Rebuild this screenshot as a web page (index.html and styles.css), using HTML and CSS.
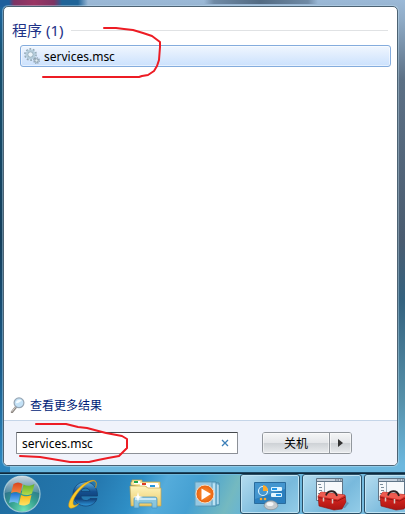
FILE: index.html
```
<!DOCTYPE html>
<html lang="zh-CN">
<head>
    <meta charset="UTF-8">
    <meta name="viewport" content="width=device-width, initial-scale=1.0">
    <title>services.msc</title>
    <link rel="stylesheet" href="styles.css">
</head>
<body>
    <svg width="0" height="0" class="defs" aria-hidden="true">
        <defs>
            <linearGradient id="red-box" x1="0" y1="0" x2="0" y2="1">
                <stop offset="0" stop-color="#dc3a32"/>
                <stop offset=".5" stop-color="#cb211c"/>
                <stop offset="1" stop-color="#a81512"/>
            </linearGradient>
            <symbol id="toolbox" viewBox="0 0 34 34">
                <path d="M1.500 1.500h26v22h-26z" fill="#f6f9fb" stroke="#5f7587"/>
                <path d="M2 2h25v2.500H2z" fill="#c3d0dc"/>
                <path d="M1.500 4.500h26" stroke="#5f7587"/>
                <path d="M20 3h1.500M22.500 3H24M25 3h1.500" stroke="#4e6171"/>
                <path d="M9.500 5v18" stroke="#9cacb8"/>
                <path d="M3 7.500h3M4 10.500h3M4 13.500h3M3 16.500h3" stroke="#7c8e9b"/>
                <path d="M28 31l4-6 2 1-4 5z" fill="#1d4c66" fill-opacity=".35"/>
                <path d="M3 19l3-4 24 3 1 7-4 7-8 1-15-4z" fill="url(#red-box)" stroke="#8d100e" stroke-width=".6"/>
                <path d="M3 19l3-4 24 3-7 4.500z" fill="#ee5b50"/>
                <path d="M3.500 20.500l19 3.500 8-4" fill="none" stroke="#8a100e" stroke-width=".8"/>
                <path d="M11 18.500c1-5 9-6.500 11 .5" fill="none" stroke="#2a2222" stroke-width="1.800"/>
                <path d="M8.500 20.500v4M17.500 22v4.500" stroke="#d9c9c4" stroke-width="1.500"/>
            </symbol>
        </defs>
    </svg>

    <main class="start-menu">
        <section class="results">
            <h1>程序 (1)</h1>
            <div class="result-wrap">
                <a class="result" href="#services">
                    <svg class="icon" viewBox="0 0 16 16" aria-hidden="true">
                        <circle cx="6.500" cy="6.500" r="5.500" fill="none" stroke="#94a9b6" stroke-width="1.800" stroke-dasharray="1.800 1.650"/>
                        <circle cx="6.500" cy="6.500" r="4" fill="none" stroke="#b4cddb" stroke-width="2"/>
                        <circle cx="6.500" cy="6.500" r="2.700" fill="#eaf4fa" stroke="#7793a3" stroke-width=".7"/>
                        <circle cx="12.500" cy="12.500" r="2.700" fill="none" stroke="#8496a1" stroke-width="1.300" stroke-dasharray="1.200 .9"/>
                        <circle cx="12.500" cy="12.500" r="1.700" fill="#e2edf3" stroke="#8ba1ae"/>
                    </svg>
                    <span>services.msc</span>
                </a>
                <svg class="mark mark-top" viewBox="0 0 122 54" aria-hidden="true">
                    <path d="M63 3L75 3L83 4L92 5L102 8L111 11L115 14L119 17L119 22L118 35L116 41L113 46L107 50L101 51L98 52L2 52"/>
                </svg>
            </div>
        </section>

        <a class="more" href="#more">
            <svg class="icon" viewBox="0 0 16 16" aria-hidden="true">
                <path d="M6 10L2 15" stroke="#8d8782" stroke-width="2.400" stroke-linecap="round"/>
                <path d="M5.500 10L2 14.500" stroke="#d3cfcb" stroke-linecap="round"/>
                <circle cx="9" cy="5.800" r="4.900" fill="#c3e1f6" stroke="#98a7b5" stroke-width="1.200"/>
                <path d="M6 6c0-4 5-4 6-2-2 0-3 3-6 2z" fill="#f3fbff"/>
            </svg>
            <span>查看更多结果</span>
        </a>

        <form class="bottom">
            <div class="search">
                <input type="text" value="services.msc" aria-label="搜索程序和文件">
                <button class="clear" type="button" aria-label="清除">
                    <svg viewBox="0 0 8 8" aria-hidden="true"><path d="M1 1l6 6M7 1L1 7"/></svg>
                </button>
                <svg class="mark mark-bottom" viewBox="0 0 112 44" aria-hidden="true">
                    <path d="M18 4L48 4L60 7L69 8L88 13L104 16L109 19L109 28L105 32L101 36L90 38L80 40L71 42L52 42L40 40L22 37L2 36"/>
                </svg>
            </div>
            <div class="power">
                <button type="button">关机</button>
                <button class="arrow" type="button" aria-label="更多选项">
                    <svg viewBox="0 0 5 8" aria-hidden="true"><path d="M0 0l5 4-5 4z"/></svg>
                </button>
            </div>
        </form>
    </main>

    <nav class="taskbar" aria-label="任务栏">
        <button class="start" type="button" aria-label="开始">
            <svg viewBox="0 0 38 38" aria-hidden="true">
                <defs>
                    <radialGradient id="orb" cx=".55" cy=".95" r=".95">
                        <stop offset="0" stop-color="#6fe3b4"/>
                        <stop offset=".4" stop-color="#35a08f"/>
                        <stop offset=".8" stop-color="#2a6a8c"/>
                        <stop offset="1" stop-color="#31627f"/>
                    </radialGradient>
                    <linearGradient id="shine" x1="0" y1="0" x2="0" y2="1">
                        <stop offset="0" stop-color="#fff" stop-opacity=".75"/>
                        <stop offset="1" stop-color="#fff" stop-opacity=".15"/>
                    </linearGradient>
                    <linearGradient id="flag-red" x1="0" y1="0" x2="0" y2="1">
                        <stop offset="0" stop-color="#d9431c"/>
                        <stop offset="1" stop-color="#f58a45"/>
                    </linearGradient>
                    <linearGradient id="flag-green" x1="0" y1="0" x2="0" y2="1">
                        <stop offset="0" stop-color="#5fae2c"/>
                        <stop offset="1" stop-color="#b4dc4e"/>
                    </linearGradient>
                    <linearGradient id="flag-blue" x1="0" y1="0" x2="0" y2="1">
                        <stop offset="0" stop-color="#1f6fd0"/>
                        <stop offset="1" stop-color="#7cc8f5"/>
                    </linearGradient>
                    <linearGradient id="flag-yellow" x1="0" y1="0" x2="0" y2="1">
                        <stop offset="0" stop-color="#fbb615"/>
                        <stop offset="1" stop-color="#fde368"/>
                    </linearGradient>
                </defs>
                <circle cx="19" cy="19" r="18" fill="url(#orb)" stroke="#9cc6d4" stroke-width="1.200"/>
                <path d="M2 18a17 17 0 0 1 34 0c-9-3-24-3-34 0z" fill="url(#shine)"/>
                <path d="M10.500 9c3-2 6-2 9 0l-2 9.500c-3-2-6-2-9.500-.5z" fill="url(#flag-red)"/>
                <path d="M20.500 9.500c3.500 2 7 1.500 11-.5l-2.500 9.500c-3.500 2-7 2-10.500.5z" fill="url(#flag-green)"/>
                <path d="M8 19c3-2 6-1.500 9 .5l-2 9c-3-2-6-2-9-.5z" fill="url(#flag-blue)"/>
                <path d="M18 20c4 2 7 1.500 10.500 0l-2 8.500c-4 2.500-7 2.500-10.500 1z" fill="url(#flag-yellow)"/>
            </svg>
        </button>
        <a class="task" href="#ie" aria-label="Internet Explorer">
            <svg viewBox="0 0 34 34" aria-hidden="true">
                <defs>
                    <linearGradient id="ie-blue" x1="0" y1="0" x2="0" y2="1">
                        <stop offset="0" stop-color="#5fb2e4"/>
                        <stop offset=".4" stop-color="#14508f"/>
                        <stop offset=".7" stop-color="#103f78"/>
                        <stop offset="1" stop-color="#2f9be0"/>
                    </linearGradient>
                </defs>
                <path fill="url(#ie-blue)" stroke="#123f70" stroke-width=".7" fill-rule="evenodd" d="M30.500 19H14c0 5 7 6 9 2.500h7C27 33 6 31 6 17.500 6 1 31 0 30.500 19zM14 14.500h9c-1-4.500-8-4.500-9 0z"/>
                <path d="M28.500 11c4-11-6-9-15-1.500S-1 29 3 31c3 1 7-2 9-4.500-3 2-6 3-6-.5 0-6 10-17.500 17-21 4.500-2 7.500-1.500 5.500 6z" fill="#fbc928" stroke="#d39112" stroke-width=".5"/>
            </svg>
        </a>
        <a class="task" href="#explorer" aria-label="资源管理器">
            <svg viewBox="0 0 34 34" aria-hidden="true">
                <defs>
                    <linearGradient id="folder" x1="0" y1="0" x2="0" y2="1">
                        <stop offset="0" stop-color="#fdf4bd"/>
                        <stop offset="1" stop-color="#ecca67"/>
                    </linearGradient>
                </defs>
                <path d="M2 8V5h1V3h10v2h18v8z" fill="#f8e6a0" stroke="#c9a449" stroke-width=".7"/>
                <path d="M5 4h6v3H5z" fill="#fff"/><path d="M5 4h4v2H5z" fill="#23a64a"/>
                <path d="M11 6h18v3H11z" fill="#fff"/><path d="M13 6h4v2h-4z" fill="#dd3c24"/>
                <path d="M18 8h12v3H18z" fill="#fff"/><path d="M21 8h5v2h-5z" fill="#2596dd"/>
                <path d="M1 9h15l3 2h13v18H2z" fill="url(#folder)" stroke="#c9a449" stroke-width=".7"/>
                <path d="M5 31v-9q0-2 2-2h19q2 0 2 2v9h-5v-5H10v5z" fill="#7fc4e8" fill-opacity=".9" stroke="#4a94bd" stroke-width=".7"/>
                <path d="M6 22h21" stroke="#dcf3ff" stroke-width="1.500"/>
                <path d="M9 15l1 4 4 1-4 1-1 4-1-4-4-1 4-1z" fill="#fff"/>
            </svg>
        </a>
        <a class="task" href="#player" aria-label="媒体播放器">
            <svg viewBox="0 0 34 34" aria-hidden="true">
                <defs>
                    <radialGradient id="play">
                        <stop offset="0" stop-color="#ff9a3c"/>
                        <stop offset="1" stop-color="#e9600d"/>
                    </radialGradient>
                </defs>
                <path d="M11 6h17v22H11z" fill="#8dc7e5" stroke="#488cad"/>
                <path d="M7 5h18v24H7z" fill="#a5d7ef" stroke="#488cad"/>
                <path d="M4 5h17v24H4z" fill="#96c8e2" stroke="#5f9fbe"/>
                <path d="M23 7v21M27 8v19" stroke="#d3edf8"/>
                <circle cx="14" cy="17" r="9" fill="url(#play)" stroke="#f5dbc0"/>
                <path d="M10.500 11.500L20 17l-9.500 6z" fill="#fff"/>
            </svg>
        </a>
        <a class="task open" href="#control" aria-label="控制面板">
            <svg viewBox="0 0 34 34" aria-hidden="true">
                <path d="M1.500 5.500h31v21h-31z" fill="#2b7fbe" stroke="#2a6c9d"/>
                <path d="M2 6h30v6L2 22z" fill="#5eaee0" fill-opacity=".5"/>
                <circle cx="10" cy="14" r="4.500" fill="none" stroke="#d7effb" stroke-width="1.200"/>
                <path d="M10 14V8a6 6 0 0 1 5 6z" fill="#ffa928"/>
                <path d="M18.500 10.500h10v3h-10zM18.500 16.500h10v3h-10z" fill="#2496e6" stroke="#e0f5ff"/>
                <path d="M24 11h4v2h-4zM19 17h4v2h-4z" fill="#e0f5ff"/>
                <circle cx="8" cy="22" r="1.300" fill="#ffa928"/>
                <circle cx="12" cy="22" r="1.300" fill="#ffa928"/>
                <path d="M11 29c1-7 13-7 14 0-2 5-12 5-14 0z" fill="#c5cacd" stroke="#838d94" stroke-width=".7"/>
                <ellipse cx="17" cy="27" rx="3.500" ry="2" fill="#f4f6f7"/>
            </svg>
        </a>
        <a class="task open" href="#tools-1" aria-label="工具箱"><svg aria-hidden="true"><use href="#toolbox"/></svg></a>
        <a class="task open" href="#tools-2" aria-label="工具箱"><svg aria-hidden="true"><use href="#toolbox"/></svg></a>
    </nav>
</body>
</html>
```
FILE: styles.css
```
* {
    box-sizing: border-box;
}
body {
    margin: 0;
    min-height: 100vh;
    display: flex;
    flex-direction: column;
    overflow: hidden;
    font-family: "Noto Sans", "Noto Sans CJK SC", sans-serif;
    font-size: 12px;
    color: #000;
    background:
        linear-gradient(90deg, #1f5f9c 0, #1f5f9c 9px, #7d3363 14px, #9a3563 34px, #7d3363 54px, #1f6397 62px, #1f6397 78px, transparent 88px) top / 100% 7px no-repeat,
        linear-gradient(90deg, transparent 204px, #6f8aa5 214px, #526a82 260px, #6f8aa5 308px, transparent 318px) top / 100% 4px no-repeat,
        linear-gradient(#1f6aa6 0, #16506f 60px, #143f5c 240px, #1a5c8a 370px, #2b86bf 460px) left top / 10px 100% no-repeat,
        linear-gradient(#9bb9d7 0, #8fabc6 20px, #5c7085 80px, #4a5c70 240px, #34627f 300px, #5691aa 400px, #6cb8df 465px, #6cb8df 100%);
}
button,
input {
    font: inherit;
    color: inherit;
}
button {
    padding: 0;
    cursor: pointer;
}
a {
    text-decoration: none;
}
.defs {
    position: absolute;
}
.icon {
    width: 16px;
    height: 16px;
    flex: none;
}

/* start menu */
.start-menu {
    flex: 1;
    display: flex;
    flex-direction: column;
    margin: 6px 7px 7px 3px;
    background-color: #fff;
    border: 1px solid #4c6273;
    border-radius: 5px;
    box-shadow: 0 0 0 1px rgba(200, 230, 245, 0.4);
}
.results {
    flex: 1;
    padding: 12px 6px 0 16px;
}
h1 {
    display: flex;
    align-items: center;
    gap: 8px;
    margin: 0 3px 4px -8px;
    font-size: 15px;
    line-height: 22px;
    font-weight: normal;
    color: #1e3287;
}
h1::after {
    content: "";
    flex: 1;
    height: 1px;
    background-color: #e0e2e4;
}
.result-wrap {
    position: relative;
}
.result {
    display: flex;
    align-items: center;
    gap: 4px;
    height: 22px;
    padding: 0 3px;
    color: #000;
    border: 1px solid #84acdd;
    border-radius: 3px;
    background: linear-gradient(#f0f6fe, #cbe1fd);
    box-shadow: inset 0 0 0 1px rgba(255, 255, 255, 0.5);
}
.more {
    display: flex;
    align-items: center;
    gap: 4px;
    padding: 0 6px;
    height: 30px;
    color: #001c78;
}
.bottom {
    display: flex;
    align-items: flex-start;
    gap: 24px;
    height: 45px;
    padding: 11px 12px 0;
    background-color: #f0f3fb;
    border-top: 1px solid #c5d5e8;
    border-radius: 0 0 4px 4px;
}
.search {
    position: relative;
    display: flex;
    flex: 0 1 222px;
    height: 22px;
    background-color: #fff;
    border: 1px solid #8c9097;
    border-top-color: #45484c;
    border-radius: 1px;
}
.search input {
    flex: 1;
    min-width: 0;
    padding: 0 5px;
    border: 0;
    outline: 0;
    background: none;
}
.clear {
    width: 24px;
    border: 0;
    background: none;
}
.clear svg {
    display: block;
    width: 8px;
    height: 8px;
    margin: auto;
    stroke: #3c7fb8;
    stroke-width: 1.3;
}
.power {
    display: flex;
    width: 90px;
    height: 22px;
    border: 1px solid #92979d;
    border-radius: 3px;
    background: linear-gradient(#f5f6f7 0, #e4e6e9 48%, #ced2d6 52%, #e9ebee 100%);
}
.power button {
    flex: 1;
    border: 0;
    background: none;
    box-shadow: inset 0 0 0 1px rgba(255, 255, 255, 0.5);
}
.power .arrow {
    flex: none;
    width: 22px;
    border-left: 1px solid #92979d;
}
.arrow svg {
    display: block;
    width: 5px;
    height: 8px;
    margin: auto;
    fill: #333;
}

/* hand-drawn red marks */
.mark {
    position: absolute;
    fill: none;
    stroke: #ed1c24;
    stroke-width: 2;
    stroke-linecap: round;
    stroke-linejoin: round;
    pointer-events: none;
}
.mark-top {
    left: 21px;
    top: -20px;
    width: 122px;
    height: 54px;
}
.mark-bottom {
    left: 1px;
    top: -13px;
    width: 112px;
    height: 44px;
}

/* taskbar */
.taskbar {
    display: flex;
    gap: 2px;
    height: 41px;
    border-top: 1px solid #0f2a3d;
    background: linear-gradient(115deg, #1f6c9f 0, #2579b0 24%, #2f8fc6 34%, #55acdb 40%, #45a0d2 48%, #74b9c0 57%, #63b3dc 63%, #80bfe0 100%);
    box-shadow: inset 0 1px #6fb9dd, 0 -1px #1d4661;
}
.start,
.task {
    display: flex;
    flex: none;
    align-items: center;
    justify-content: center;
}
.start {
    width: 52px;
    padding: 0 0 0 3px;
    justify-content: flex-start;
    border: 0;
    background: none;
}
.start svg {
    width: 38px;
    height: 38px;
}
.task {
    width: 60px;
    height: 40px;
}
.task svg {
    width: 34px;
    height: 34px;
}
.open {
    border: 1px solid #2a4f66;
    border-radius: 3px;
    background: linear-gradient(135deg, #b5dcef, #78b9dc 60%, #94cde8);
    box-shadow: inset 0 0 0 1px #c0e4f4;
}
```
